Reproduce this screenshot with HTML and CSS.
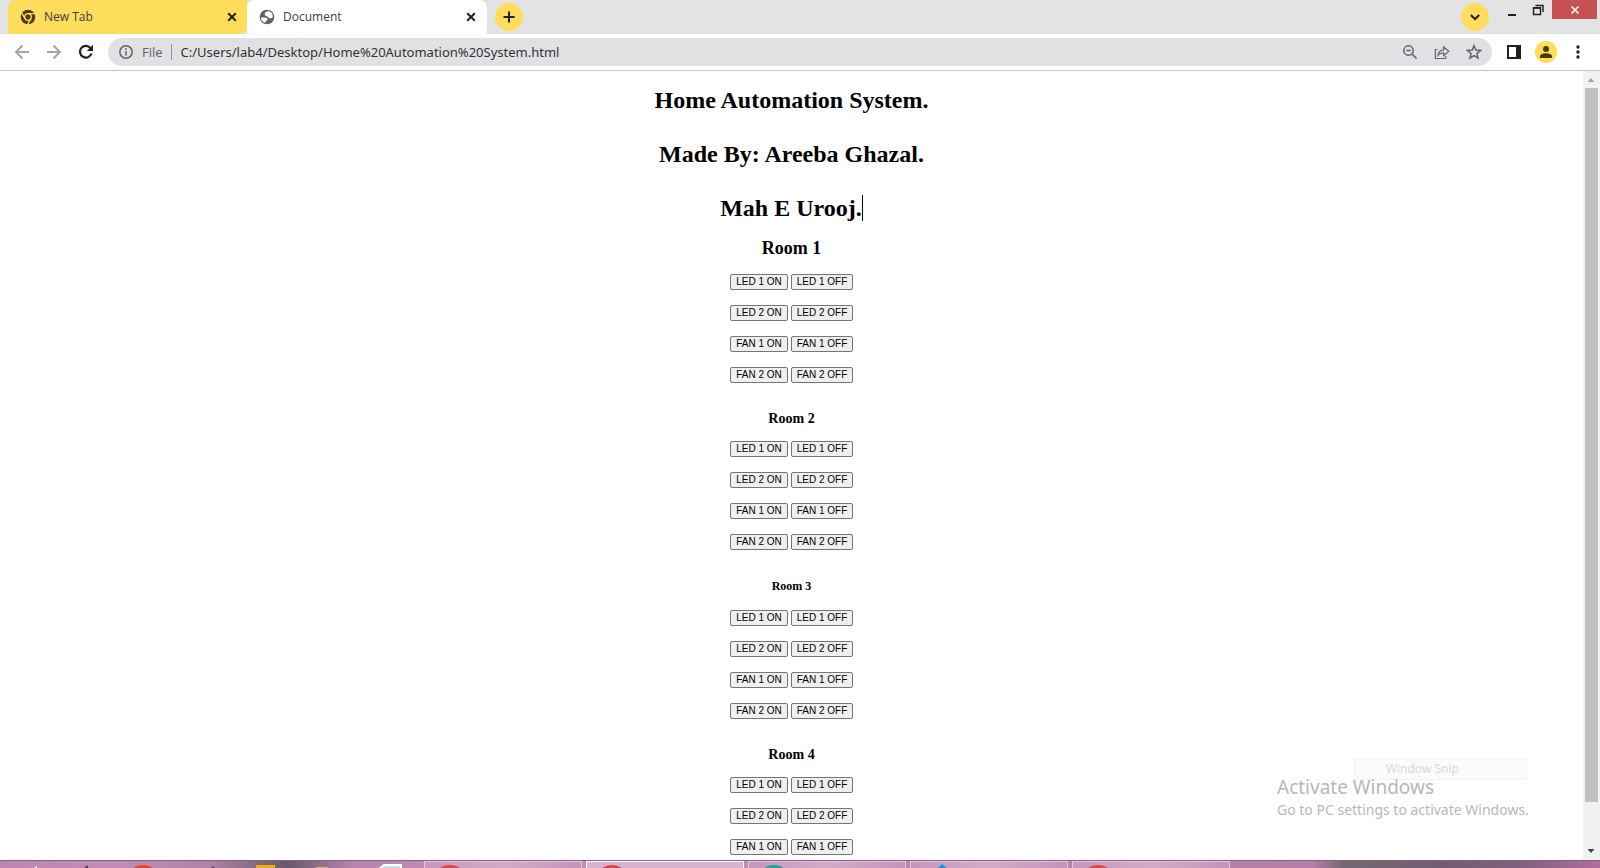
FILE: index.html
```html
<!DOCTYPE html>
<html lang="en">
<head>
<meta charset="utf-8">
<title>Document</title>
<link rel="stylesheet" href="styles.css">
</head>
<body>
<div class="window">
  <header class="tabstrip">
    <div class="tab tab-idle">
      <svg class="favicon" viewBox="0 0 16 16"><circle cx="8" cy="8" r="7.3" fill="#4a3c18"/><circle cx="8" cy="8" r="3.3" fill="none" stroke="#ffdd5c" stroke-width="1.3"/><path d="M8 4.7h7M5.1 9.7 1.7 3.9M10.9 9.7 7.5 15.5" stroke="#ffdd5c" stroke-width="1.3"/></svg>
      <a class="tab-title" href="#">New Tab</a>
      <button class="tab-close" aria-label="Close New Tab"><svg viewBox="0 0 10 10"><path d="m1.2 1.2 7.6 7.6m0-7.6L1.2 8.8"/></svg></button>
    </div>
    <div class="tab tab-active">
      <svg class="favicon" viewBox="0 0 16 16"><circle cx="8" cy="8" r="7.3" fill="#5f6368"/><path d="M9.800 2.200C7.400 2.300 5.800 3.500 5.600 4.800c-.1 1.600 1.200 2.300 2.700 2.600 1.300.3 1.300 1.900 2.900 1.900 1.200 0 2.300-.5 2.500-1.300C14.200 5 12.300 2.700 9.800 2.200zM1.900 8.500h3.500c2.500 0 3.400 1 3.200 2.100-.2 1-1.800.8-1.800 2.100l-.6 1C3.500 13 2 11.200 1.900 8.500z" fill="#fff"/></svg>
      <a class="tab-title" href="#">Document</a>
      <button class="tab-close" aria-label="Close Document"><svg viewBox="0 0 10 10"><path d="m1.2 1.2 7.6 7.6m0-7.6L1.2 8.8"/></svg></button>
    </div>
    <button class="round new-tab" aria-label="New tab"><svg viewBox="0 0 12 12"><path d="M6 .5v11M.5 6h11"/></svg></button>
    <button class="round tab-search" aria-label="Search tabs"><svg viewBox="0 0 12 12"><path d="m1.800 4 4.200 4 4.200-4"/></svg></button>
    <div class="controls">
      <button class="control" aria-label="Minimize"><svg viewBox="0 0 12 12"><path d="M2 11h8" stroke-width="2"/></svg></button>
      <button class="control" aria-label="Restore"><svg viewBox="0 0 12 12"><path d="M1.500 4h7v6.500h-7z" stroke-width="1.400"/><path d="M1 3.700h8M3.500 1.500h7.500V8" stroke-width="1.400"/></svg></button>
      <button class="control control-close" aria-label="Close"><svg viewBox="0 0 12 12"><path d="m2.500 2.500 7 7m0-7-7 7" stroke-width="1.700"/></svg></button>
    </div>
  </header>
  <nav class="toolbar">
    <button class="tool dim" aria-label="Back"><svg viewBox="0 0 16 16"><path d="M15 8H2m6.500-6.500L2 8l6.500 6.500"/></svg></button>
    <button class="tool dim" aria-label="Forward"><svg viewBox="0 0 16 16"><path d="M1 8h13M7.500 1.500 14 8l-6.500 6.500"/></svg></button>
    <button class="tool" aria-label="Reload"><svg viewBox="0 0 16 16"><path d="M13.500 9.500A5.900 5.900 0 1 1 12.500 4" stroke-width="2.200"/><path d="M15 .8V7H8.800z" fill="currentColor" stroke="none"/></svg></button>
    <div class="omnibox">
      <svg class="info" viewBox="0 0 16 16"><circle cx="8" cy="8" r="6.200"/><path d="M8 7.200v4.300M8 4.300V6"/></svg>
      <label class="scheme" for="url">File</label>
      <input class="url" id="url" type="text" value="C:/Users/lab4/Desktop/Home%20Automation%20System.html">
      <button class="action" aria-label="Zoom"><svg viewBox="0 0 16 16"><circle cx="6.500" cy="6.500" r="4.700"/><path d="m10 10 4.500 4.500M4.300 6.500h4.400"/></svg></button>
      <button class="action" aria-label="Share"><svg viewBox="0 0 16 16"><path d="M3.500 5.500H1.300v9h10.500v-2.500M4 11.200c.5-3.700 2.600-5.200 5.700-5.400V2.800l5 4.500-5 4.300V8.800C7.200 8.700 5.600 9.300 4 11.200z" stroke-width="1.200"/></svg></button>
      <button class="action" aria-label="Bookmark"><svg viewBox="0 0 16 16"><path d="m8 1.800 1.800 4.300 4.700.4-3.600 3.100 1.100 4.600L8 11.700l-4 2.500 1.100-4.600L1.500 6.500l4.700-.4z" stroke-width="1.500"/></svg></button>
    </div>
    <button class="tool" aria-label="Side panel"><svg viewBox="0 0 16 16"><path d="M2 2h12v12H2z" stroke-width="2"/><path d="M10 2h5v12h-5z" fill="currentColor" stroke="none"/></svg></button>
    <button class="avatar" aria-label="Profile"><svg viewBox="0 0 22 22"><circle cx="11" cy="8" r="3"/><path d="M5 17v-1.500C5 13.500 8 12.300 11 12.300s6 1.200 6 3.200V17z"/></svg></button>
    <button class="tool" aria-label="Menu"><svg viewBox="0 0 16 16"><g fill="currentColor" stroke="none"><circle cx="8" cy="3" r="1.700"/><circle cx="8" cy="8" r="1.700"/><circle cx="8" cy="13" r="1.700"/></g></svg></button>
  </nav>
  <div class="viewport">
    <main class="page">
      <h1>Home Automation System.</h1>
      <h1>Made By: Areeba Ghazal.</h1>
      <h1><span class="caret">Mah E Urooj.</span></h1>
      <section class="room room-lead">
        <h2>Room 1</h2>
        <div class="switches">
          <button>LED 1 ON</button><button>LED 1 OFF</button>
          <button>LED 2 ON</button><button>LED 2 OFF</button>
          <button>FAN 1 ON</button><button>FAN 1 OFF</button>
          <button>FAN 2 ON</button><button>FAN 2 OFF</button>
        </div>
      </section>
      <section class="room">
        <h3>Room 2</h3>
        <div class="switches">
          <button>LED 1 ON</button><button>LED 1 OFF</button>
          <button>LED 2 ON</button><button>LED 2 OFF</button>
          <button>FAN 1 ON</button><button>FAN 1 OFF</button>
          <button>FAN 2 ON</button><button>FAN 2 OFF</button>
        </div>
      </section>
      <section class="room">
        <h4>Room 3</h4>
        <div class="switches">
          <button>LED 1 ON</button><button>LED 1 OFF</button>
          <button>LED 2 ON</button><button>LED 2 OFF</button>
          <button>FAN 1 ON</button><button>FAN 1 OFF</button>
          <button>FAN 2 ON</button><button>FAN 2 OFF</button>
        </div>
      </section>
      <section class="room">
        <h3>Room 4</h3>
        <div class="switches">
          <button>LED 1 ON</button><button>LED 1 OFF</button>
          <button>LED 2 ON</button><button>LED 2 OFF</button>
          <button>FAN 1 ON</button><button>FAN 1 OFF</button>
        </div>
      </section>
    </main>
    <div class="scrollbar">
      <svg class="arrow arrow-up" viewBox="0 0 16 16"><path d="M4.500 10.500h7L8 6.500z"/></svg>
      <div class="thumb"></div>
      <svg class="arrow" viewBox="0 0 16 16"><path d="M4.500 5.500h7L8 9.500z"/></svg>
    </div>
    <div class="snip">Window Snip</div>
    <div class="watermark">
      <p class="watermark-title">Activate Windows</p>
      <p class="watermark-text">Go to PC settings to activate Windows.</p>
    </div>
  </div>
  <footer class="taskbar">
    <div class="pins">
      <svg viewBox="0 0 420 8"><path d="m31 8 6-2v2zM83 8l4-4 2 4zM210 8l3-3 3 3z" fill="#4d4050"/><path d="m32 8 5-3v3z" fill="#fff"/><ellipse cx="143" cy="10" rx="11" ry="6" fill="#e2453c"/><path d="M256 8V4h19v4z" fill="#f3ac18"/><path d="M316 8V6h12v2z" fill="#e5ac70"/><path d="m379 8 5-4h17v4z" fill="#c8daf4" stroke="#fff"/></svg>
    </div>
    <div class="task"><svg viewBox="0 0 26 8"><ellipse cx="13" cy="9" rx="11" ry="6" fill="#d84450"/></svg></div>
    <div class="task task-current"><svg viewBox="0 0 26 8"><ellipse cx="13" cy="9" rx="11" ry="6" fill="#d84450"/></svg></div>
    <div class="task"><svg viewBox="0 0 26 8"><ellipse cx="13" cy="8" rx="10" ry="5" fill="#25a196"/></svg></div>
    <div class="task"><svg viewBox="0 0 26 8"><path d="m13 8 6-6 7 6z" fill="#1f8fe0"/></svg></div>
    <div class="task"><svg viewBox="0 0 26 8"><ellipse cx="13" cy="9" rx="11" ry="6" fill="#e2453c"/></svg></div>
    <div class="tray"></div>
  </footer>
</div>
</body>
</html>
```
FILE: styles.css
```css
* {
  box-sizing: border-box;
}

body {
  margin: 0;
  background: #fff;
}

.window {
  display: flex;
  flex-direction: column;
  height: 100vh;
  overflow: hidden;
  font-family: "Open Sans", "Noto Sans", sans-serif;
  color: #202124;
}

svg {
  display: block;
  fill: none;
  stroke: currentColor;
  stroke-width: 2;
}

.favicon,
.arrow,
.avatar svg,
.taskbar svg {
  stroke: none;
}

.tabstrip button,
.toolbar button {
  display: flex;
  align-items: center;
  justify-content: center;
  flex: none;
  padding: 0;
  border: 0;
  background: none;
  color: inherit;
}

/* Tab strip */
.tabstrip {
  display: flex;
  align-items: flex-start;
  flex: none;
  height: 34px;
  padding-left: 8px;
  background: #e3e3e3;
}

.tab {
  display: flex;
  align-items: center;
  gap: 8px;
  width: 239px;
  height: 34px;
  padding: 0 10px 0 12px;
}

.tab-idle {
  border-radius: 8px 0 8px 0;
  background: #ffdd5c;
}

.tab-active {
  width: 240px;
  padding-right: 11px;
  border-radius: 8px 8px 0 0;
  background: #fff;
}

.favicon {
  width: 16px;
  height: 16px;
}

.tab-title {
  flex: 1;
  font-size: 12px;
  line-height: 16px;
  color: #3c3c3c;
  text-decoration: none;
}

.tab-close svg {
  width: 10px;
  height: 10px;
}

.round {
  width: 28px;
  height: 28px;
  margin-top: 3px;
  border-radius: 50%;
}

.tabstrip .round {
  background: #ffdd5c;
}

.round svg,
.control svg {
  width: 12px;
  height: 12px;
}

.new-tab {
  margin-left: 8px;
}

.tab-search {
  margin-left: auto;
}

.controls {
  display: flex;
  margin: 0 3px 0 10px;
}

.control {
  width: 26px;
  height: 19px;
}

.tabstrip .control-close {
  width: 45px;
  margin-left: 1px;
  background: #c75050;
  color: #fff;
}

/* Address bar */
.toolbar {
  display: flex;
  align-items: center;
  flex: none;
  height: 37px;
  padding: 0 6px;
  border-bottom: 1px solid #c6c6c6;
}

.tool {
  width: 32px;
  height: 32px;
}

.tool svg,
.info,
.action svg {
  width: 16px;
  height: 16px;
}

.toolbar .dim {
  color: #a5a5a5;
}

.omnibox {
  display: flex;
  align-items: center;
  flex: 1;
  height: 28px;
  margin: 0 6px;
  padding: 0 10px;
  border-radius: 14px;
  background: #e1e1e3;
  color: #5f6368;
  font-size: 13px;
}

.info,
.action svg {
  stroke-width: 1.5;
}

.scheme {
  margin-left: 8px;
  padding-right: 8px;
  border-right: 1px solid #909294;
  line-height: 16px;
}

.url {
  flex: 1;
  min-width: 0;
  padding: 0 0 0 9px;
  border: 0;
  outline: 0;
  background: none;
  color: #303134;
  font: 13px "Noto Sans", "Open Sans", sans-serif;
}

.omnibox .action {
  width: 16px;
  height: 16px;
  margin-left: 16px;
}

.avatar {
  width: 22px;
  height: 22px;
  margin: 0 5px;
  border-radius: 50%;
}

.toolbar .avatar {
  background: #ffdd5c;
}

.avatar svg {
  width: 22px;
  height: 22px;
  fill: #4c3b04;
}

/* Page */
.viewport {
  position: relative;
  display: flex;
  flex: 1;
  min-height: 0;
}

.page {
  flex: 1;
  padding-top: 15px;
  overflow: hidden;
  color: #000;
  font-family: "Liberation Serif", "Times New Roman", serif;
  text-align: center;
}

h1,
h2,
h3,
h4,
p {
  margin: 0;
}

h1 {
  margin-bottom: 26px;
  font-size: 24px;
  line-height: 28px;
}

.caret {
  border-right: 1px solid #000;
}

.room {
  padding-top: 28px;
}

.room-lead {
  margin-top: -10px;
  padding-top: 0;
}

h2 {
  margin-bottom: 16px;
  font-size: 18px;
  line-height: 20px;
}

h3 {
  margin-bottom: 14px;
  font-size: 14px;
  line-height: 16px;
}

h4 {
  margin: 1px 0 17px;
  font-size: 12px;
  line-height: 14px;
}

.switches {
  display: grid;
  grid-template-columns: 58px 62px;
  justify-content: center;
  gap: 15px 3px;
}

.switches button {
  height: 16px;
  padding: 0;
  border: 1px solid #767676;
  border-radius: 2px;
  background: #efefef;
  color: #000;
  font: 10px/14px "Liberation Sans", Arial, sans-serif;
}

.scrollbar {
  display: flex;
  flex-direction: column;
  flex: none;
  width: 17px;
  background: #f1f1f1;
}

.arrow {
  width: 16px;
  height: 17px;
  fill: #404040;
}

.arrow-up {
  fill: #a3a3a3;
}

.thumb {
  flex: 1;
  margin: 0 2px 41px;
  background: #c1c1c1;
}

/* Desktop overlays */
.snip {
  position: absolute;
  right: 73px;
  bottom: 80px;
  width: 173px;
  padding-left: 31px;
  border: 1px solid #f0f3f6;
  background: #fafbfd;
  color: #d5d7d9;
  font-size: 12px;
  line-height: 20px;
}

.watermark {
  position: absolute;
  right: 67px;
  bottom: 40px;
  width: 256px;
  color: #b8b8b8;
  font-family: "Noto Sans", "Open Sans", sans-serif;
  white-space: nowrap;
}

.watermark-title {
  font-size: 19px;
  line-height: 25px;
}

.watermark-text {
  font-size: 14px;
  line-height: 20px;
}

/* Taskbar */
.taskbar {
  display: flex;
  gap: 4px;
  flex: none;
  height: 8px;
  overflow: hidden;
  border-top: 1px solid #80647c;
  background: linear-gradient(90deg, #bd86b1, #c48bb6 7%, #b184a8 13%, #66586a 18%, #b983ae 22%, #c78eb9 30%, #b780a8 78%, #b77fa9 82%, #756873 84%, #725c73 90%, #80607e 95%, #b26d9f);
}

.pins {
  flex: 0 0 420px;
}

.pins svg {
  width: 420px;
  height: 8px;
}

.task {
  flex: 0 0 158px;
  padding-left: 12px;
  border: 1px solid #e5c5dc;
  border-bottom: 0;
  background: linear-gradient(90deg, #c795bb, #d3abc9 50%, #c594b9);
}

.task-current {
  border-color: #fff;
  background: #d9b3d0;
}

.task svg {
  width: 26px;
  height: 8px;
}

.tray {
  flex: 1;
}
```
